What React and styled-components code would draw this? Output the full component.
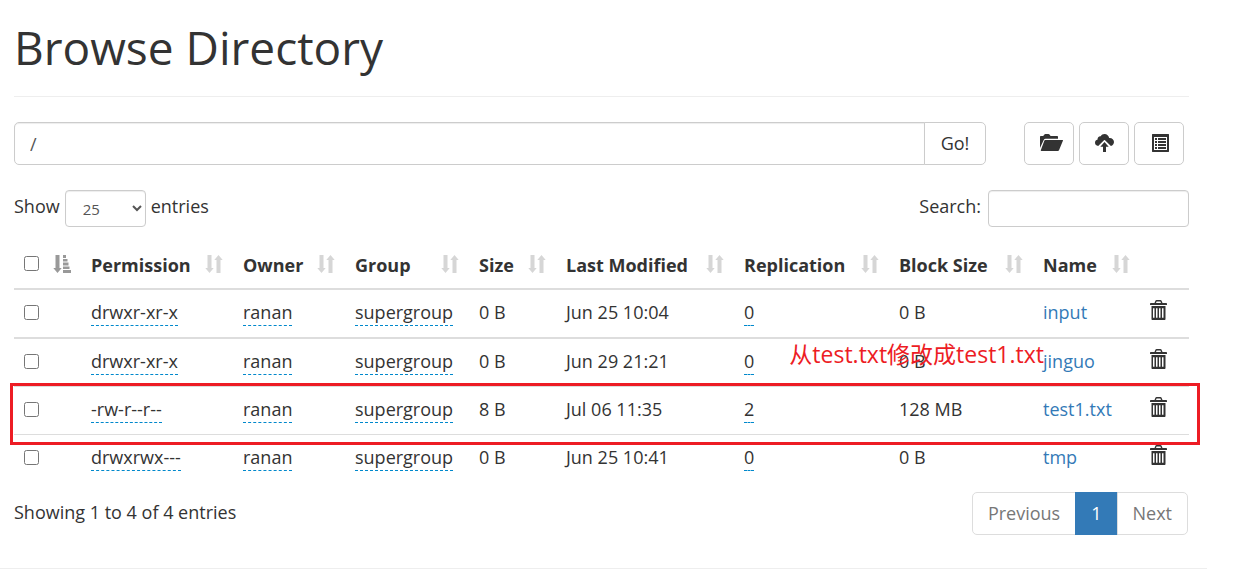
import React from 'react'
import styled, { createGlobalStyle } from 'styled-components'

const columns = [
    { title: 'Permission', width: 152 },
    { title: 'Owner', width: 112 },
    { title: 'Group', width: 124 },
    { title: 'Size', width: 87 },
    { title: 'Last Modified', width: 178 },
    { title: 'Replication', width: 155 },
    { title: 'Block Size', width: 144 },
    { title: 'Name', width: 107 },
]

const files = [
    { permission: 'drwxr-xr-x', size: '0 B', modified: 'Jun 25 10:04', replication: '0', block: '0 B', name: 'input' },
    { permission: 'drwxr-xr-x', size: '0 B', modified: 'Jun 29 21:21', replication: '0', block: '0 B', name: 'jinguo' },
    { permission: '-rw-r--r--', size: '8 B', modified: 'Jul 06 11:35', replication: '2', block: '128 MB', name: 'test1.txt' },
    { permission: 'drwxrwx---', size: '0 B', modified: 'Jun 25 10:41', replication: '0', block: '0 B', name: 'tmp' },
]

const FolderIcon = () => (
    <svg width="23" height="17" viewBox="0 0 23 17" fill="currentColor" aria-hidden="true">
        <path d="M0 14V3C0 2.400.4 2 1 2h2.200L4.400.6C4.700.2 5 0 5.400 0h3c.5 0 .8.2 1.100.6L10.600 2H17c.6 0 1 .4 1 1v1.700H5.600c-.9 0-1.500.4-1.900 1.200z" />
        <path d="M5.200 6H22.300c.6 0 .8.3.6.8L19 16.200c-.2.500-.6.800-1.200.800H1.400c-.6 0-.8-.3-.6-.8L4.400 6.600c.1-.4.4-.6.8-.6z" />
    </svg>
)

const UploadIcon = () => (
    <svg width="19" height="18" viewBox="0 0 19 18" fill="currentColor" aria-hidden="true">
        <path d="M3.200 11.900C1.400 11.700 0 10.400 0 8.700 0 7.100 1.100 5.800 2.600 5.500 2.300 3.500 3.800 2 5.700 2.200 6.500.8 7.900 0 9.500 0c2.400 0 4.300 1.700 4.700 4 2.600-.3 4.800 1.500 4.800 4 0 1.900-1.300 3.500-3.100 3.900L10 6.200c-.3-.3-.7-.3-1 0z" />
        <path d="M9.500 8l4.200 4.800H11V18H8v-5.200H5.300z" />
    </svg>
)

const ListIcon = () => (
    <svg width="19" height="18" viewBox="-2 0 19 18" fill="currentColor" aria-hidden="true">
        <path fillRule="evenodd" d="M.5 0h16c.3 0 .5.2.5.500v17c0 .3-.2.500-.5.500H.5c-.3 0-.5-.2-.5-.5V.5C0 .2.200 0 .5 0zM2 3v13h13V3z" />
        <path d="M3 4h2v2H3zM6 4h8v2H6zM3 7h2v2H3zM6 7h8v2H6zM3 10h2v2H3zM6 10h8v2H6zM3 13h2v2H3zM6 13h8v2H6z" />
    </svg>
)

const TrashIcon = () => (
    <svg width="17" height="20" viewBox="0 0 17 20" fill="currentColor" aria-hidden="true">
        <path fillRule="evenodd" d="M0 5V4c0-.6.400-1 1-1h3.500l.9-2.200C5.600.3 6 0 6.600 0h3.800c.6 0 1 .3 1.200.8l.9 2.200H16c.6 0 1 .4 1 1v1zM6 3h5l-.6-1.500H6.600z" />
        <path fillRule="evenodd" d="M1.500 6h14v13c0 .6-.4 1-1 1h-12c-.6 0-1-.4-1-1zM3 8.200v9.600h1.500V8.200zM6 8.200v9.600h1.500V8.200zM9 8.200v9.600h1.500V8.200zM12 8.200v9.600h1.500V8.200z" />
    </svg>
)

const SortIcon = () => (
    <svg width="18" height="18" viewBox="0 0 18 18" fill="#d6d6d6" aria-hidden="true">
        <path d="M2.500 0h4v13h2.200L4.500 18 .3 13h2.200zM11.500 18h4V5h2.200L13.500 0 9.300 5h2.200z" />
    </svg>
)

const SortedIcon = () => (
    <svg width="18" height="18" viewBox="0 0 18 18" fill="#999" aria-hidden="true">
        <path d="M2.500 0h4v13h2.200L4.500 18 .3 13h2.200zM10 0h3v3h-3zM10 4h4.500v2.500H10zM10 7.500h5.500v3H10zM10 11.500h6.500v2.500H10zM10 15h8v3h-8z" />
    </svg>
)

const App = () => {

    return (
        <>
        <GlobalStyle />
        <Page>
            <Content>
                <Title>Browse Directory</Title>
                <Toolbar>
                    <PathGroup>
                        <PathInput type="text" aria-label="Directory" defaultValue="/" />
                        <GoButton type="button">Go!</GoButton>
                    </PathGroup>
                    <Actions>
                        <IconButton type="button" aria-label="Create directory"><FolderIcon /></IconButton>
                        <IconButton type="button" aria-label="Upload files"><UploadIcon /></IconButton>
                        <IconButton type="button" aria-label="Cut and paste"><ListIcon /></IconButton>
                    </Actions>
                </Toolbar>
                <Filters>
                    <FilterLabel>
                        Show
                        <LengthSelect defaultValue="25">
                            <option>25</option>
                            <option>50</option>
                            <option>100</option>
                        </LengthSelect>
                        entries
                    </FilterLabel>
                    <FilterLabel>
                        Search:
                        <SearchInput type="search" />
                    </FilterLabel>
                </Filters>
                <TableWrapper>
                    <Table>
                        <colgroup>
                            <Col $width={67} />
                            {columns.map((column) => <Col key={column.title} $width={column.width} />)}
                            <Col $width={49} />
                        </colgroup>
                        <thead>
                            <tr>
                                <HeadCell>
                                    <HeadContent><Checkbox type="checkbox" aria-label="Select all" /><SortedIcon /></HeadContent>
                                </HeadCell>
                                {columns.map((column) => (
                                    <HeadCell key={column.title}>
                                        <HeadContent>{column.title}<SortIcon /></HeadContent>
                                    </HeadCell>
                                ))}
                                <HeadCell />
                            </tr>
                        </thead>
                        <tbody>
                            {files.map((file) => (
                                <Row key={file.name}>
                                    <Cell><CellContent><Checkbox type="checkbox" aria-label={file.name} /></CellContent></Cell>
                                    <Cell><Editable type="button">{file.permission}</Editable></Cell>
                                    <Cell><Editable type="button">ranan</Editable></Cell>
                                    <Cell><Editable type="button">supergroup</Editable></Cell>
                                    <Cell>{file.size}</Cell>
                                    <Cell>{file.modified}</Cell>
                                    <Cell><Editable type="button">{file.replication}</Editable></Cell>
                                    <Cell>{file.block}</Cell>
                                    <Cell><FileLink href="#">{file.name}</FileLink></Cell>
                                    <Cell><DeleteButton type="button" aria-label={'Delete ' + file.name}><TrashIcon /></DeleteButton></Cell>
                                </Row>
                            ))}
                        </tbody>
                    </Table>
                    <Highlight />
                    <Note>从test.txt修改成test1.txt</Note>
                </TableWrapper>
                <TableFooter>
                    <Info>Showing 1 to 4 of 4 entries</Info>
                    <Pagination>
                        <PageLink href="#">Previous</PageLink>
                        <PageLink href="#" $active>1</PageLink>
                        <PageLink href="#">Next</PageLink>
                    </Pagination>
                </TableFooter>
            </Content>
        </Page>
        </>
    )
}


export default App

const GlobalStyle = createGlobalStyle`
* {
    box-sizing: border-box;
}

body {
    margin: 0;
    background: #fff;
    color: #333;
    font-family: 'Open Sans', 'Noto Sans CJK SC', sans-serif;
    font-size: 18px;
    line-height: 27px;
}

button, input, select {
    font: inherit;
    color: inherit;
}
`

const Page = styled.div`
margin-right: 39px;
border-bottom: 1px solid #eee;
`

const Content = styled.main`
padding: 17px 18px 33px 14px;
`

const Title = styled.h1`
margin: 0 0 25px;
padding-bottom: 19px;
border-bottom: 1px solid #eee;
font-size: 46px;
font-weight: 400;
line-height: 60px;
`

const Toolbar = styled.div`
display: flex;
gap: 38px;
padding-right: 5px;
`

const PathGroup = styled.div`
display: flex;
flex: 1;
`

const PathInput = styled.input`
flex: 1;
min-width: 0;
height: 43px;
padding: 0 15px;
border: 1px solid #ccc;
border-radius: 5px 0 0 5px;
box-shadow: inset 0 1px 1px rgba(0, 0, 0, 0.075);
color: #555;
`

const GoButton = styled.button`
width: 62px;
margin-left: -1px;
padding: 0;
border: 1px solid #ccc;
border-radius: 0 5px 5px 0;
background: #fff;
cursor: pointer;
`

const Actions = styled.div`
display: flex;
gap: 5px;
`

const IconButton = styled.button`
display: flex;
align-items: center;
width: 50px;
height: 43px;
padding: 0 0 2px 15px;
border: 1px solid #ccc;
border-radius: 5px;
background: #fff;
cursor: pointer;

svg {
    flex: none;
}
`

const Filters = styled.div`
display: flex;
justify-content: space-between;
margin: 25px 0 14px;
`

const FilterLabel = styled.label`
display: flex;
gap: 5px;
line-height: 33px;
`

const LengthSelect = styled.select`
width: 81px;
height: 37px;
padding: 0 0 0 13px;
border: 1px solid #ccc;
border-radius: 4px;
background: #fff;
box-shadow: inset 0 1px 1px rgba(0, 0, 0, 0.075);
color: #555;
font-size: 15px;
`

const SearchInput = styled.input`
width: 201px;
height: 37px;
margin-left: 2px;
padding: 0 12px;
border: 1px solid #ccc;
border-radius: 4px;
box-shadow: inset 0 1px 1px rgba(0, 0, 0, 0.075);
font-size: 15px;
`

const TableWrapper = styled.div`
position: relative;
`

const Table = styled.table`
width: 100%;
table-layout: fixed;
border-collapse: separate;
border-spacing: 0;
`

const Col = styled.col`
width: ${({ $width }) => $width}px;
`

const HeadCell = styled.th`
padding: 11px 10px 9px;
border-bottom: 2px solid #ddd;
font-weight: 700;
text-align: left;
white-space: nowrap;
`

const HeadContent = styled.div`
display: flex;
align-items: center;
justify-content: space-between;
height: 27px;

svg, input {
    flex: none;
    margin-bottom: 4px;
}
`

const Cell = styled.td`
height: 47px;
padding: 9px 10px 11px;
border-top: 1px solid #ddd;
white-space: nowrap;
`

const Row = styled.tr`
&:first-child ${Cell} {
    border-top: 0;
}

&:nth-child(2) ${Cell} {
    border-top-width: 2px;
}
`

const CellContent = styled.div`
display: flex;
align-items: center;
height: 27px;
`

const Checkbox = styled.input`
width: 15px;
height: 15px;
margin: 0;
`

const Editable = styled.button`
display: block;
padding: 0;
border: 0;
border-bottom: 1px dashed #08c;
background: none;
line-height: 26px;
cursor: pointer;
`

const FileLink = styled.a`
color: #337ab7;
text-decoration: none;

&:hover {
    text-decoration: underline;
}
`

const DeleteButton = styled.button`
display: flex;
align-items: flex-start;
height: 27px;
padding: 1px 0 0;
border: 0;
background: none;
cursor: pointer;
`

// marks the renamed file
const Highlight = styled.div`
position: absolute;
top: 142px;
right: -11px;
left: -4px;
height: 62px;
border: 3px solid #ed1c24;
pointer-events: none;
`

const Note = styled.div`
position: absolute;
top: 97px;
right: 145px;
color: #ed1c24;
font-size: 23px;
line-height: 32px;
white-space: nowrap;
pointer-events: none;
`

const TableFooter = styled.div`
display: flex;
justify-content: space-between;
padding: 10px 1px 0 0;
`

const Info = styled.div`
line-height: 40px;
`

const Pagination = styled.nav`
display: flex;
`

const PageLink = styled.a`
height: 43px;
margin-left: -1px;
padding: 0 15px;
border: 1px solid ${({ $active }) => ($active ? '#337ab7' : '#ddd')};
background: ${({ $active }) => ($active ? '#337ab7' : '#fff')};
color: ${({ $active }) => ($active ? '#fff' : '#777')};
line-height: 41px;
text-decoration: none;

&:first-child {
    border-radius: 5px 0 0 5px;
}

&:last-child {
    border-radius: 0 5px 5px 0;
}
`
